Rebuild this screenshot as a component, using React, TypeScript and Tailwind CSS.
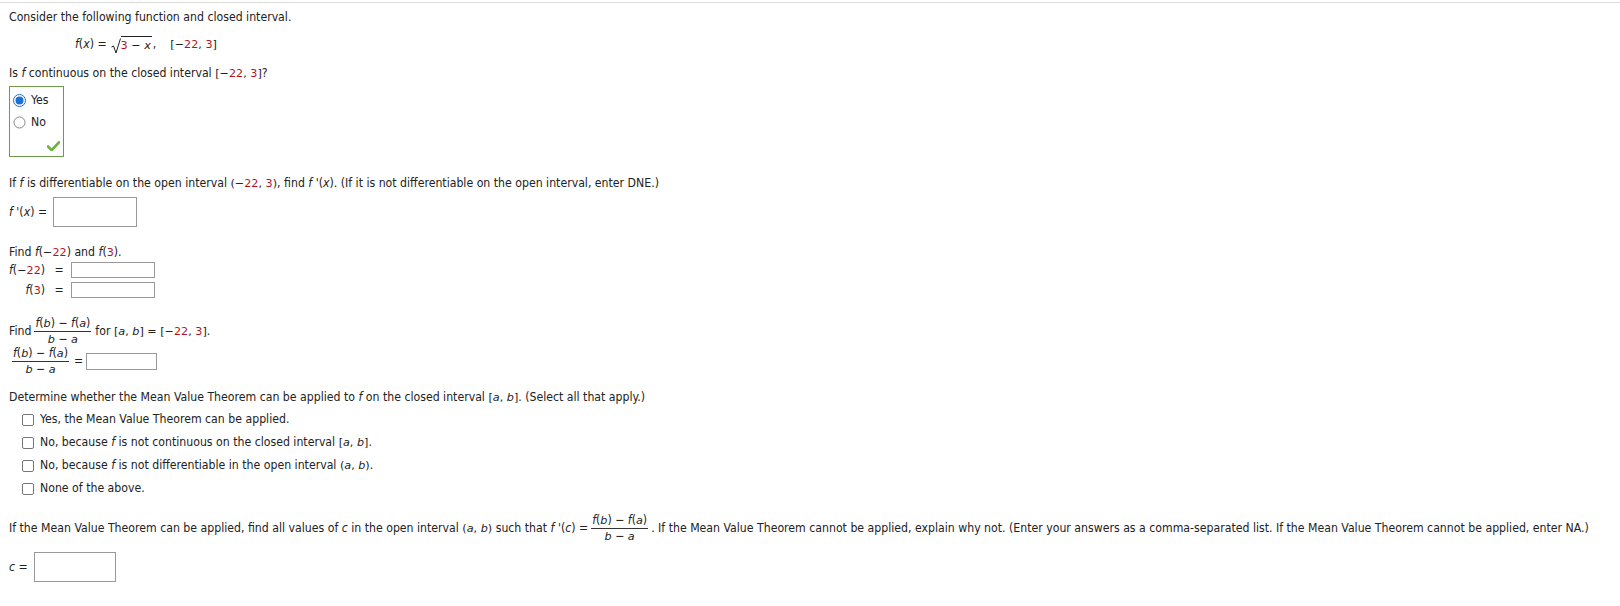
import React from 'react';

// Small helpers for the math-ish bits of the question
const Red: React.FC<{ children: React.ReactNode }> = ({ children }) => (
  <span className="text-[#b5121b]">{children}</span>
);

const I: React.FC<{ children: React.ReactNode }> = ({ children }) => (
  <span className="italic">{children}</span>
);

const M: React.FC<{ children: React.ReactNode }> = ({ children }) => (
  <span className="font-['DejaVu_Sans',sans-serif] text-[11.2px]">{children}</span>
);

const Frac: React.FC = () => (
  <span className="inline-flex flex-col items-center align-middle mx-[3px] leading-[13px]">
    <span className="px-[1px] pb-[1px]">
      <I>f</I>(<M><I>b</I></M>) − <I>f</I>(<M><I>a</I></M>)
    </span>
    <span className="w-full border-t border-[#333]" />
    <span className="pt-[1px]">
      <M><I>b</I></M> − <M><I>a</I></M>
    </span>
  </span>
);

const Box: React.FC<{ className: string }> = ({ className }) => (
  <span className={`inline-block border border-[#999] bg-white ${className}`} />
);

const CheckBox: React.FC<{ children: React.ReactNode }> = ({ children }) => (
  <div className="flex items-center h-[23px] pl-[13px]">
    <span className="w-[12px] h-[12px] rounded-[2px] border border-[#777] bg-white mr-[6px]" />
    <span>{children}</span>
  </div>
);

export default function App() {
  return (
    <div className="w-[1620px] h-[606px] bg-white text-[#222] text-[12.2px] leading-[15px] font-['DejaVu_Sans_Condensed','DejaVu_Sans',sans-serif] overflow-hidden">
      <div className="h-[3px] border-b border-[#ddd]" />
      <div className="px-[9px] pt-[7px]">
        <p>Consider the following function and closed interval.</p>

        <div className="mt-[8px] ml-[66px] flex items-center h-[22px]">
          <span><I>f</I>(<I>x</I>) = </span>
          <span className="inline-flex items-end ml-[4px]">
            <svg width="10" height="16" viewBox="0 0 10 16" className="mb-[-1px]">
              <path d="M0.5 9 L2.5 8 L5 15 L9.5 0.5" fill="none" stroke="#222" strokeWidth="1" />
            </svg>
            <span className="border-t border-[#222] pt-[1px] pr-[1px]">
              <M><Red>3</Red> − <I>x</I></M>
            </span>
          </span>
          <span className="ml-[1px]">,</span>
          <M><span className="ml-[14px]">[−<Red>22</Red>, <Red>3</Red>]</span></M>
        </div>

        <p className="mt-[11px]">
          Is <I>f</I> continuous on the closed interval <M>[−<Red>22</Red>, <Red>3</Red>]</M>?
        </p>

        <div className="mt-[5px] w-[55px] h-[71px] border border-[#6f9a4c] flex flex-col pl-[3px] pt-[3px] relative">
          <div className="flex items-center h-[20px]">
            <svg width="13" height="13" viewBox="0 0 13 13" className="mr-[5px]">
              <circle cx="6.5" cy="6.5" r="6" fill="#fff" stroke="#1a6fd8" strokeWidth="1" />
              <circle cx="6.5" cy="6.5" r="4" fill="#1a6fd8" />
            </svg>
            <span>Yes</span>
          </div>
          <div className="flex items-center h-[24px]">
            <svg width="13" height="13" viewBox="0 0 13 13" className="mr-[5px]">
              <circle cx="6.5" cy="6.5" r="5.5" fill="#fff" stroke="#888" strokeWidth="1" />
            </svg>
            <span>No</span>
          </div>
          <svg width="13" height="10" viewBox="0 0 14 11" className="absolute right-[3px] bottom-[5px]">
            <path d="M1 6 L5 10 L13 1.5" fill="none" stroke="#6cb33f" strokeWidth="3" strokeLinecap="round" strokeLinejoin="round" />
          </svg>
        </div>

        <p className="mt-[19px]">
          If <I>f</I> is differentiable on the open interval <M>(−<Red>22</Red>, <Red>3</Red>)</M>, find <I>f</I> '(<I>x</I>). (If it is not differentiable on the open interval, enter DNE.)
        </p>

        <div className="mt-[6px] flex items-center">
          <span><I>f</I> '(<I>x</I>) = </span>
          <Box className="ml-[6px] w-[84px] h-[30px]" />
        </div>

        <p className="mt-[18px]">
          Find <I>f</I>(<M>−<Red>22</Red></M>) and <I>f</I>(<M><Red>3</Red></M>).
        </p>

        <div className="mt-[2px] grid grid-cols-[auto_auto] justify-start items-center gap-y-[4px]">
          <span className="text-right"><I>f</I>(<M>−<Red>22</Red></M>) <span className="ml-[6px]">=</span></span>
          <Box className="ml-[7px] w-[84px] h-[16px]" />
          <span className="text-right"><I>f</I>(<M><Red>3</Red></M>) <span className="ml-[6px]">=</span></span>
          <Box className="ml-[7px] w-[84px] h-[16px]" />
        </div>

        <div className="mt-[19px] flex items-center">
          <span>Find</span>
          <Frac />
          <span className="ml-[1px]">for <M>[<I>a</I>, <I>b</I>] = [−<Red>22</Red>, <Red>3</Red>]</M>.</span>
        </div>

        <div className="mt-[1px] flex items-center">
          <Frac />
          <span className="ml-[2px]">=</span>
          <Box className="ml-[3px] w-[71px] h-[17px]" />
        </div>

        <p className="mt-[14px]">
          Determine whether the Mean Value Theorem can be applied to <I>f</I> on the closed interval <M>[<I>a</I>, <I>b</I>]</M>. (Select all that apply.)
        </p>

        <div className="mt-[3px] flex flex-col">
          <CheckBox>Yes, the Mean Value Theorem can be applied.</CheckBox>
          <CheckBox>No, because <I>f</I> is not continuous on the closed interval <M>[<I>a</I>, <I>b</I>]</M>.</CheckBox>
          <CheckBox>No, because <I>f</I> is not differentiable in the open interval <M>(<I>a</I>, <I>b</I>)</M>.</CheckBox>
          <CheckBox>None of the above.</CheckBox>
        </div>

        <div className="mt-[14px] flex items-center">
          <span>
            If the Mean Value Theorem can be applied, find all values of <I>c</I> in the open interval <M>(<I>a</I>, <I>b</I>)</M> such that <I>f</I> '(<I>c</I>) =
          </span>
          <Frac />
          <span>. If the Mean Value Theorem cannot be applied, explain why not. (Enter your answers as a comma-separated list. If the Mean Value Theorem cannot be applied, enter NA.)</span>
        </div>

        <div className="mt-[9px] flex items-center">
          <span><I>c</I> =</span>
          <Box className="ml-[6px] w-[82px] h-[30px]" />
        </div>
      </div>
    </div>
  );
}
